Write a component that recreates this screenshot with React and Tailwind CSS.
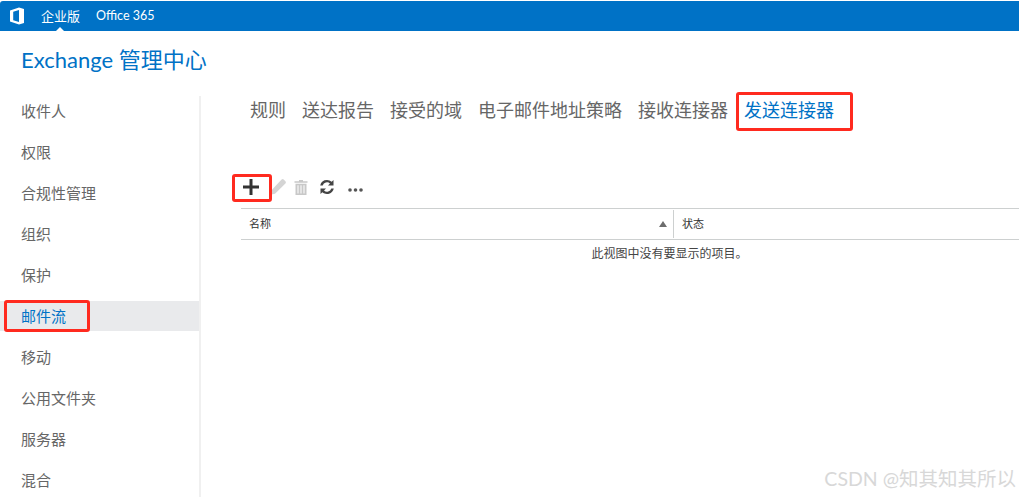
const FONT = "font-['Lato','Noto_Sans_CJK_SC',sans-serif]";
const navItems = ['收件人', '权限', '合规性管理', '组织', '保护', '邮件流', '移动', '公用文件夹', '服务器', '混合'];
const tabs = ['规则', '送达报告', '接受的域', '电子邮件地址策略', '接收连接器', '发送连接器'];

function OfficeLogo() {
  return (
    <svg width="16" height="18" viewBox="0 0 16 18" fill="white">
      <path d="M1 3.500 10 .5l5 1.500v14l-5 1.600-9-3.100V3.500Zm9-.4-5.800 1.600v8.500l5.800 1.900V3.100Z" fillRule="evenodd" />
    </svg>
  );
}

function ToolbarIcons() {
  return (
    <>
      <svg width="16" height="16" viewBox="0 0 16 16" className="ml-px" fill="#333">
        <path d="M6.500 0h3v6.500H16v3H9.500V16h-3V9.500H0v-3h6.500Z" />
      </svg>
      <svg width="16" height="16" viewBox="0 0 16 16" className="ml-[11px]" fill="#d4d4d4">
        <path d="M11.600.6a1.500 1.500 0 0 1 2.100 0l1.700 1.700a1.500 1.500 0 0 1 0 2.100L5 14.700.5 15.700l1-4.500Z" />
      </svg>
      <svg width="14" height="15" viewBox="0 0 14 15" className="ml-[8px]" fill="#c8c8c8">
        <path d="M5 0h4v1.200h4.500v1.500H.5V1.200H5ZM1.500 3.700h11V15h-11Zm2 1.500V13.500h1V5.200Zm3 0V13.500h1V5.200Zm3 0V13.500h1V5.200Z" fillRule="evenodd" />
      </svg>
      <svg width="16" height="16" viewBox="0 0 16 16" className="ml-[11px]" fill="#444">
        <path d="M8 1a7 7 0 0 1 4.700 1.800L14.500 1v5.500H9l2-2A4.500 4.500 0 0 0 3.700 6.500H1.200A7 7 0 0 1 8 1ZM1.500 9.500H7l-2 2a4.500 4.500 0 0 0 7.300-2h2.500A7 7 0 0 1 3.300 13.200L1.500 15Z" />
      </svg>
      <svg width="15" height="4" viewBox="0 0 15 4" className="ml-[13px] mt-[5px]" fill="#555">
        <circle cx="2" cy="2" r="1.800" /><circle cx="7.500" cy="2" r="1.800" /><circle cx="13" cy="2" r="1.800" />
      </svg>
    </>
  );
}

export default function App() {
  return (
    <div className={`${FONT} relative h-[497px] w-[1019px] overflow-hidden bg-white pt-px`}>
      {/* Top bar */}
      <div className="flex h-[30px] items-center rounded-tl-[3px] bg-[#0072c6] pl-[9px] text-[12.500px] text-white">
        <OfficeLogo />
        <span className="relative ml-[16px] text-[13px] leading-[30px]">
          企业版
          <span className="absolute bottom-0 left-[15px] border-x-[4px] border-b-[4px] border-x-transparent border-b-white" />
        </span>
        <span className="ml-[16px]">Office 365</span>
      </div>

      <div className="pl-[21px] pt-[14px] text-[22px] leading-[30px] text-[#0072c6]">Exchange 管理中心</div>

      <div className="mt-[21px] flex">
        {/* Sidebar */}
        <div className="flex h-[402px] w-[201px] shrink-0 flex-col gap-[11px] border-r-2 border-[#f0f0f0]">
          {navItems.map(item => (
            <div
              key={item}
              className={`h-[30px] pl-[21px] text-[15px] leading-[30px] ${
                item === '邮件流' ? 'bg-[#e9eaec] text-[#0072c6]' : 'text-[#666666]'
              }`}
            >
              {item}
            </div>
          ))}
        </div>

        {/* Content */}
        <div className="min-w-0 flex-1">
          <div className="flex gap-[16px] pl-[49px] text-[18px] leading-[28px] text-[#666666]">
            {tabs.map(tab => (
              <span key={tab} className={tab === '发送连接器' ? 'text-[#0072c6]' : ''}>{tab}</span>
            ))}
          </div>

          <div className="ml-[40px] mt-[42px]">
            <div className="flex h-[42px] items-center pl-px">
              <ToolbarIcons />
            </div>
            <div className="flex h-[32px] border-y border-[#cdd0d0] text-[11px] leading-[30px] text-[#333333]">
              <div className="relative w-[432px] pl-[8px]">
                名称
                <span className="absolute right-[6px] top-[12px] border-x-[4px] border-b-[6px] border-x-transparent border-b-[#6d6d6d]" />
              </div>
              <div className="my-[1px] h-[28px] w-px bg-[#cdd0d0]" />
              <div className="pl-[8px]">状态</div>
            </div>
            <div className="w-[857px] pt-[5px] text-center text-[12px] leading-[17px] text-[#444444]">此视图中没有要显示的项目。</div>
          </div>
        </div>
      </div>

      {/* Red annotation boxes drawn over the screenshot */}
      <div className="absolute left-[736px] top-[92px] h-[39px] w-[117px] rounded-[3px] border-[3px] border-[#ff2a1f]" />
      <div className="absolute left-[232px] top-[174px] h-[28px] w-[40px] rounded-[3px] border-[3px] border-[#ff2a1f]" />
      <div className="absolute left-[4px] top-[300px] h-[32px] w-[86px] rounded-[3px] border-[3px] border-[#ff2a1f]" />

      {/* Watermark */}
      <div className="absolute bottom-[6px] right-[3px] text-[19.500px] leading-[24px] text-[#d8d8d8]">CSDN @知其知其所以</div>
    </div>
  );
}
